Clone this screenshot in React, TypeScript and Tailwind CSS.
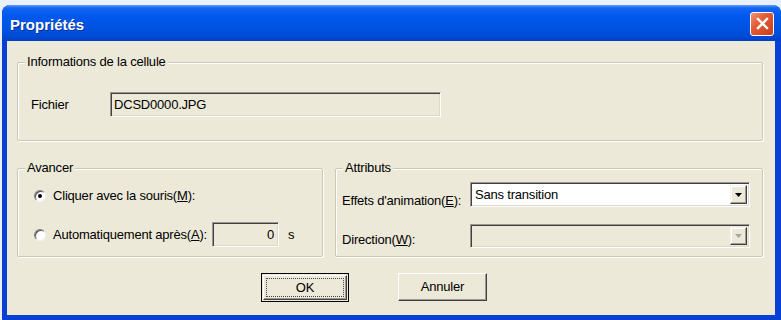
import React from "react";

const sunken =
  "border border-t-[#9a9890] border-l-[#9a9890] border-b-white border-r-white shadow-[inset_1px_1px_0_#404040,inset_-1px_-1px_0_#dcd9cc]";

function Group({ label, className, children }: { label: string; className: string; children?: React.ReactNode }) {
  return (
    <div className={"relative border border-[#cac7b8] rounded-[2px] shadow-[1px_1px_0_#ffffff,inset_1px_1px_0_#ffffff] " + className}>
      <span className="absolute -top-[9px] left-[7px] px-[2px] bg-[#ece9d8] leading-[16px]">{label}</span>
      {children}
    </div>
  );
}

function Radio({ checked }: { checked?: boolean }) {
  return (
    <div className="w-[12px] h-[12px] rounded-full bg-white border border-t-[#808080] border-l-[#808080] border-b-[#f4f3ee] border-r-[#f4f3ee] shadow-[inset_1px_1px_0_#505050] flex items-center justify-center shrink-0">
      {checked && <div className="w-[4px] h-[4px] rounded-full bg-black" />}
    </div>
  );
}

function DropButton({ disabled }: { disabled?: boolean }) {
  return (
    <div className="w-[17px] h-full bg-[#ece9d8] border border-t-[#f4f3ee] border-l-[#f4f3ee] border-b-[#404040] border-r-[#404040] shadow-[inset_-1px_-1px_0_#a09e94,inset_1px_1px_0_#ffffff] flex items-center justify-center">
      <svg width="7" height="4" viewBox="0 0 7 4">
        <path d="M0 0H7L3.5 4Z" fill={disabled ? "#a8a69c" : "#000"} />
      </svg>
    </div>
  );
}

export default function App() {
  return (
    <div className="w-[781px] h-[320px] bg-[#eaf0f9] pt-[5px] pl-[2px] overflow-hidden font-['Liberation_Sans',Arial,sans-serif] text-[13px] tracking-[-0.2px] text-black">
      <div className="w-[779px] h-[315px] flex flex-col rounded-t-[8px] bg-[#0a3fd6] overflow-hidden">
        {/* Title bar */}
        <div className="h-[36px] shrink-0 flex items-center justify-between pl-[8px] pr-[7px] bg-[linear-gradient(180deg,#5aa0ff_0%,#1466f2_8%,#0058ee_30%,#0054e3_60%,#0049d6_88%,#003fc6_100%)]">
          <span className="text-white font-bold text-[15px] leading-none tracking-[0px] [text-shadow:1px_1px_0_#0a2e96] mt-[2px]">
            Propriétés
          </span>
          <div className="w-[24px] h-[24px] mt-[1px] rounded-[3px] border border-white bg-[linear-gradient(135deg,#f39475_0%,#e35a35_40%,#c8401c_100%)] flex items-center justify-center">
            <svg width="13" height="13" viewBox="0 0 13 13">
              <path d="M2 2L11 11M11 2L2 11" stroke="#fff" strokeWidth="2.4" strokeLinecap="square" />
            </svg>
          </div>
        </div>
        {/* Content */}
        <div className="flex-1 ml-[5px] mr-[6px] mb-[5px] bg-[#ece9d8] flex flex-col">
          <Group label="Informations de la cellule" className="mt-[21px] ml-[10px] w-[746px] h-[79px]">
            <div className="flex items-center pt-[29px] pl-[13px]">
              <span className="w-[79px] leading-[16px]">Fichier</span>
              <div className={"w-[331px] h-[25px] bg-[#ece9d8] flex items-center pl-[3px] " + sunken}>
                DCSD0000.JPG
              </div>
            </div>
          </Group>

          <div className="flex gap-[12px] mt-[27px] ml-[10px]">
            <Group label="Avancer" className="w-[306px] h-[89px]">
              <div className="flex flex-col pt-[17px] pl-[16px]">
                <div className="flex items-center h-[20px] gap-[7px]">
                  <Radio checked />
                  <span>
                    Cliquer avec la souris(<u>M</u>):
                  </span>
                </div>
                <div className="flex items-center h-[25px] mt-[16px]">
                  <Radio />
                  <span className="ml-[7px] w-[159px]">
                    Automatiquement après(<u>A</u>):
                  </span>
                  <div className={"w-[67px] h-[25px] bg-[#ece9d8] flex items-center justify-end pr-[4px] " + sunken}>
                    0
                  </div>
                  <span className="ml-[9px]">s</span>
                </div>
              </div>
            </Group>

            <Group label="Attributs" className="w-[428px] h-[89px]">
              <div className="flex flex-col pt-[13px] pl-[6px]">
                <div className="flex items-start h-[25px]">
                  <span className="w-[128px] mt-[11px] leading-[16px]">
                    Effets d'animation(<u>E</u>):
                  </span>
                  <div className={"w-[280px] h-[25px] bg-white flex items-stretch p-[2px] " + sunken}>
                    <span className="flex-1 flex items-center pl-[2px]">Sans transition</span>
                    <DropButton />
                  </div>
                </div>
                <div className="flex items-start h-[24px] mt-[17px]">
                  <span className="w-[128px] mt-[8px] leading-[16px]">
                    Direction(<u>W</u>):
                  </span>
                  <div className={"w-[280px] h-[24px] bg-[#ece9d8] flex items-stretch p-[2px] " + sunken}>
                    <span className="flex-1" />
                    <DropButton disabled />
                  </div>
                </div>
              </div>
            </Group>
          </div>

          <div className="flex gap-[49px] mt-[16px] ml-[254px]">
            <div className="w-[88px] h-[29px] bg-[#ece9d8] border border-black p-[1px]">
              <div className="w-full h-full border border-t-white border-l-white border-b-[#404040] border-r-[#404040] shadow-[inset_-1px_-1px_0_#9d9b91] p-[2px]">
                <div className="w-full h-full border border-dotted border-[#444] flex items-center justify-center">OK</div>
              </div>
            </div>
            <div className="w-[89px] h-[28px] bg-[#ece9d8] border border-t-white border-l-white border-b-[#404040] border-r-[#404040] shadow-[inset_-1px_-1px_0_#9d9b91] flex items-center justify-center">
              Annuler
            </div>
          </div>
        </div>
      </div>
    </div>
  );
}
